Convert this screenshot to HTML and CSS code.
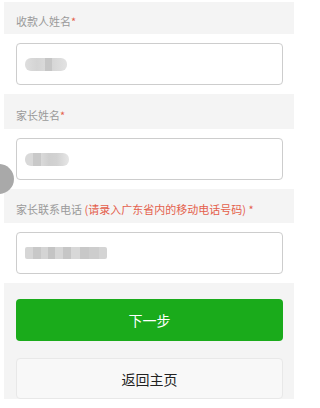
FILE: index.html
```html
<!DOCTYPE html>
<html lang="zh-CN">
<head>
<meta charset="utf-8">
<title>信息填写</title>
<link rel="stylesheet" href="styles.css">
</head>
<body>
<div class="page">
  <div class="label label-first">收款人姓名<span class="star">*</span></div>
  <div class="field">
    <div class="input"><div class="blur blur-a"></div></div>
  </div>
  <div class="label">家长姓名<span class="star">*</span></div>
  <div class="field">
    <div class="input"><div class="blur blur-b"></div></div>
  </div>
  <div class="label label-third">家长联系电话 <span class="hint">(请录入广东省内的移动电话号码)</span> <span class="star">*</span></div>
  <div class="field">
    <div class="input"><div class="blur blur-c"></div></div>
  </div>
  <div class="actions">
    <button class="btn btn-primary" type="button">下一步</button>
    <button class="btn btn-default" type="button">返回主页</button>
  </div>
  <div class="float-ball"></div>
</div>
</body>
</html>
```
FILE: styles.css
```css
html, body {
  margin: 0;
  padding: 0;
  background: #ffffff;
}
body {
  font-family: "Noto Sans CJK SC", "Noto Sans", sans-serif;
  overflow: hidden;
}
.page {
  position: relative;
  width: 290px;
  margin: 2px 0 0 4px;
  background: #f4f4f4;
}
.label {
  padding: 13px 12px 6px;
  font-size: 11px;
  line-height: 16px;
  color: #9a9a9a;
  white-space: nowrap;
}
.label-first {
  padding-top: 11px;
  padding-bottom: 5px;
}
.label-third {
  padding-top: 12px;
}
.star {
  color: #e4604c;
}
.hint {
  color: #e4604c;
}
.field {
  background: #ffffff;
  padding: 9px 11px 9px 12px;
}
.input {
  box-sizing: border-box;
  height: 42px;
  border: 1px solid #cdcdcd;
  border-radius: 4px;
  background: #ffffff;
  padding-left: 8px;
  display: flex;
  align-items: center;
}
.blur {
  height: 13px;
  border-radius: 6px;
  filter: blur(0.6px);
}
.blur-a {
  width: 42px;
  background: linear-gradient(90deg, #dedede 0, #d4d4d4 12px, #d9d9d9 20px, #c6c6c6 20px, #c6c6c6 27px, #d6d6d6 27px, #e2e2e2 42px);
}
.blur-b {
  width: 44px;
  background: linear-gradient(90deg, #d9d9d9 0, #d9d9d9 8px, #c9c9c9 8px, #c9c9c9 16px, #dadada 16px, #cfcfcf 24px, #d2d2d2 32px, #e6e6e6 44px);
}
.blur-c {
  width: 82px;
  height: 12px;
  border-radius: 2px;
  background: linear-gradient(90deg, #d6d6d6 0, #d6d6d6 8px, #c8c8c8 8px, #c8c8c8 16px, #d4d4d4 16px, #d4d4d4 23px, #c4c4c4 23px, #c4c4c4 30px, #d6d6d6 30px, #d6d6d6 38px, #c6c6c6 38px, #c6c6c6 46px, #d8d8d8 46px, #d8d8d8 55px, #c8c8c8 55px, #c8c8c8 64px, #cdcdcd 64px, #cdcdcd 74px, #d4d4d4 74px, #d4d4d4 82px);
}
.actions {
  display: flex;
  flex-direction: column;
  gap: 17px;
  padding: 16px 11px 0 12px;
}
.btn {
  box-sizing: border-box;
  width: 100%;
  margin: 0;
  border-radius: 4px;
  font-family: "Noto Sans CJK SC", "Noto Sans", sans-serif;
  font-size: 14px;
  line-height: 20px;
  cursor: pointer;
}
.btn-primary {
  height: 42px;
  border: none;
  background: #1aab1b;
  color: #ffffff;
}
.btn-default {
  height: 41px;
  border: 1px solid #e8e8e8;
  background: #f8f8f8;
  color: #222222;
}
.float-ball {
  position: absolute;
  left: -20px;
  top: 162px;
  width: 30px;
  height: 30px;
  border-radius: 50%;
  background: #a9a9a9;
}
```
